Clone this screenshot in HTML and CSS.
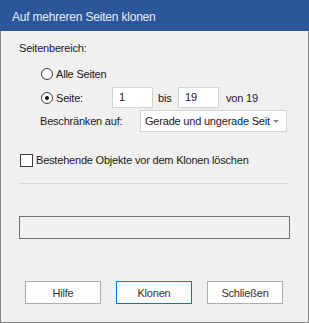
FILE: index.html
```html
<!DOCTYPE html>
<html lang="de">
<head>
  <meta charset="UTF-8" />
  <meta name="viewport" content="width=device-width, initial-scale=1.0"/>
  <title>Auf mehreren Seiten klonen</title>
  <link rel="stylesheet" href="styles.css">
</head>
<body>
  <div class="dialog">
    <div class="titlebar">Auf mehreren Seiten klonen</div>

    <div class="panel">
      <div class="group-label">Seitenbereich:</div>

      <div class="row option">
        <span class="radio"></span>
        <span class="option-text">Alle Seiten</span>
      </div>

      <div class="row option pages">
        <span class="radio checked"></span>
        <span class="option-text seite">Seite:</span>
        <span class="field">1</span>
        <span class="between">bis</span>
        <span class="field">19</span>
        <span class="total">von 19</span>
      </div>

      <div class="row restrict">
        <span class="restrict-label">Beschränken auf:</span>
        <div class="select">
          <span class="select-text">Gerade und ungerade Seit</span>
          <span class="arrow"></span>
        </div>
      </div>

      <div class="row check">
        <span class="checkbox"></span>
        <span>Bestehende Objekte vor dem Klonen löschen</span>
      </div>

      <div class="separator"></div>

      <div class="progress"></div>

      <div class="buttons">
        <button class="btn">Hilfe</button>
        <button class="btn default">Klonen</button>
        <button class="btn">Schließen</button>
      </div>
    </div>
  </div>
</body>
</html>
```

FILE: styles.css
```css
* {
  box-sizing: border-box;
  font-family: 'Liberation Sans', Arial, sans-serif;
}

body {
  margin: 0;
  background: #f0f0f0;
}

.dialog {
  width: 309px;
  height: 323px;
  display: flex;
  flex-direction: column;
  background: #f0f0f0;
  color: #1a1a1a;
  font-size: 11px;
  letter-spacing: -0.2px;
}

.titlebar {
  height: 31px;
  padding: 3px 0 0 12px;
  line-height: 28px;
  background: #2b579a;
  color: #e6ecf5;
  font-size: 12px;
  letter-spacing: -0.2px;
}

.panel {
  flex: 1;
  padding: 0 18px;
  border: 1px solid #858585;
  border-top: none;
}

.group-label {
  margin-top: 10px;
  line-height: 14px;
}

.row {
  display: flex;
  align-items: center;
}

.option {
  margin-top: 9px;
  height: 20px;
  padding-left: 22px;
}

.option.pages {
  margin-top: 3px;
  height: 21px;
}

.radio {
  width: 12px;
  height: 12px;
  border: 1px solid #3c3c3c;
  border-radius: 50%;
  background: #fff;
  display: flex;
  align-items: center;
  justify-content: center;
}

.radio.checked::after {
  content: "";
  width: 4px;
  height: 4px;
  border-radius: 50%;
  background: #111;
}

.option-text {
  margin-left: 3px;
}

.seite {
  width: 56px;
}

.field {
  width: 41px;
  height: 21px;
  padding-left: 6px;
  line-height: 19px;
  background: #fff;
  border: 1px solid #d4d4d4;
}

.between {
  width: 25px;
  padding-left: 5px;
}

.total {
  margin-left: 7px;
}

.restrict {
  margin-top: 2px;
  padding-left: 21px;
  height: 22px;
}

.restrict-label {
  width: 100px;
}

.select {
  width: 147px;
  height: 22px;
  display: flex;
  align-items: center;
  padding: 0 7px 0 4px;
  background: #fff;
  border: 1px solid #d4d4d4;
}

.select-text {
  white-space: nowrap;
}

.arrow {
  margin-left: auto;
  width: 0;
  height: 0;
  border-left: 3px solid transparent;
  border-right: 3px solid transparent;
  border-top: 3px solid #888;
}

.check {
  margin-top: 20px;
  height: 16px;
}

.checkbox {
  width: 13px;
  height: 13px;
  margin: 0 3px 0 1px;
  background: #fff;
  border: 1px solid #3c3c3c;
}

.separator {
  margin-top: 15px;
  height: 1px;
  background: #d7d7d7;
  margin-right: 1px;
}

.progress {
  margin-top: 32px;
  height: 23px;
  border: 1px solid #707070;
  background: #f0f0f0;
}

.buttons {
  margin-top: 42px;
  padding-left: 6px;
  display: flex;
  gap: 15px;
}

.btn {
  width: 76px;
  height: 23px;
  padding: 0;
  background: #fdfdfd;
  border: 1px solid #adadad;
  color: #333;
  font-size: 11px;
  letter-spacing: -0.2px;
  cursor: pointer;
}

.btn.default {
  border-color: #1a6fc9;
}
```
